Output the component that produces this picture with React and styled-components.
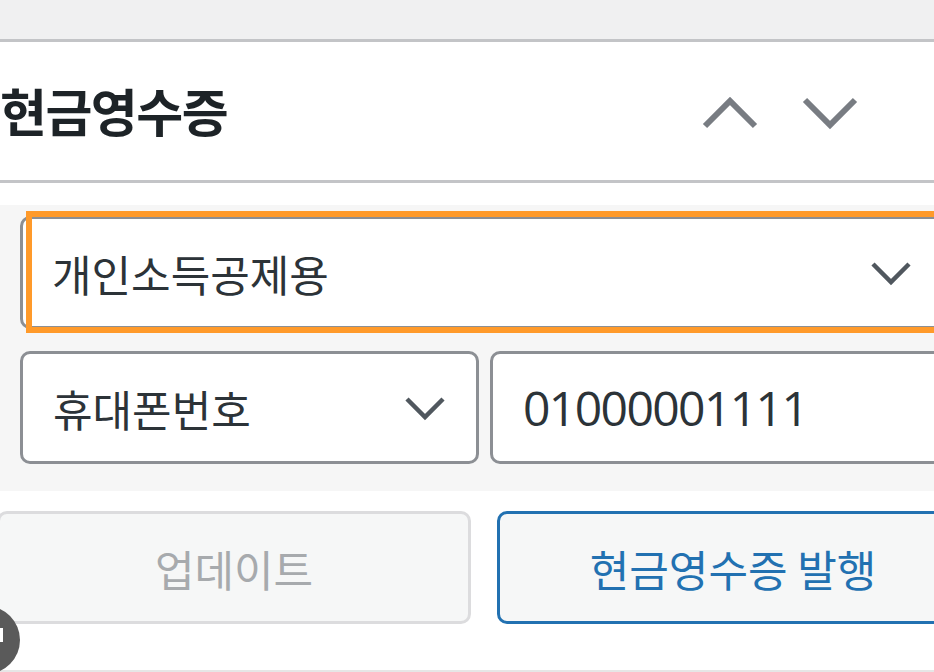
import styled, { createGlobalStyle } from 'styled-components';

const GlobalStyle = createGlobalStyle`
  html, body {
    margin: 0;
    padding: 0;
    background: #ffffff;
    overflow: hidden;
  }
  body {
    font-family: "Noto Sans CJK KR", "Noto Sans", sans-serif;
    color: #2c3338;
  }
`;

const Viewport = styled.div`
  position: relative;
  width: 934px;
  height: 672px;
  overflow: hidden;
  background: #ffffff;
`;

const Panel = styled.div`
  width: 990px;
`;

const TopBand = styled.div`
  height: 39px;
  background: #f0f0f1;
  border-bottom: 3px solid #c3c4c7;
`;

const Header = styled.div`
  height: 138px;
  display: flex;
  align-items: center;
  padding-right: 132px;
  border-bottom: 3px solid #c3c4c7;
  background: #ffffff;
`;

const Title = styled.h2`
  flex: 1;
  margin: 0;
  font-size: 51px;
  line-height: 1.2;
  font-weight: 700;
  color: #1d2327;
  letter-spacing: -1.5px;
`;

const Arrows = styled.div`
  display: flex;
  gap: 44px;
  align-items: center;
  padding-top: 4px;
`;

const ArrowButton = styled.button`
  border: none;
  background: none;
  padding: 0;
  display: flex;
  color: #787c82;
`;

const Body = styled.div`
  padding-top: 22px;
`;

const FormArea = styled.div`
  background: #f6f6f6;
  padding: 11px 0 27px 20px;
  display: flex;
  flex-direction: column;
  gap: 22px;
`;

const Row = styled.div`
  display: flex;
  gap: 11px;
`;

const Field = styled.div`
  position: relative;
  box-sizing: border-box;
  height: 113px;
  width: ${(p) => p.$width || 'auto'};
  flex: ${(p) => (p.$grow ? 1 : 'none')};
  display: flex;
  align-items: center;
  padding: 0 ${(p) => p.$padRight || 0}px 0 ${(p) => p.$padLeft || 32}px;
  background: #ffffff;
  border: 3px solid #8c8f94;
  border-radius: 10px;
  font-size: 43px;
  color: #2c3338;
`;

const FieldText = styled.span`
  flex: 1;
  white-space: nowrap;
  letter-spacing: ${(p) => p.$spacing || 0}px;
  font-family: ${(p) => (p.$digits ? '"Open Sans", sans-serif' : 'inherit')};
  font-size: ${(p) => (p.$digits ? '48px' : 'inherit')};
`;

const Caret = styled.svg`
  flex: none;
  color: #50575e;
`;

const Highlight = styled.div`
  position: absolute;
  left: 3px;
  top: -8px;
  right: -20px;
  bottom: -7px;
  border: 6px solid #ff9a2a;
  pointer-events: none;
`;

const Actions = styled.div`
  display: flex;
  gap: 26px;
  padding-top: 20px;
  height: 113px;
`;

const ActionButton = styled.button`
  box-sizing: border-box;
  height: 113px;
  width: ${(p) => p.$width || 'auto'};
  flex: none;
  margin-left: ${(p) => p.$offset || 0}px;
  border-radius: 10px;
  background: #f6f7f7;
  font-family: inherit;
  font-size: 43px;
  border: 3px solid ${(p) => (p.$primary ? '#2271b1' : '#dcdcde')};
  color: ${(p) => (p.$primary ? '#2271b1' : '#a7aaad')};
  white-space: nowrap;
`;

const BottomLine = styled.div`
  margin-top: 46px;
  border-top: 2px solid #e6e6e6;
`;

const HelpBubble = styled.div`
  position: absolute;
  left: -48px;
  top: 606px;
  width: 68px;
  height: 68px;
  border-radius: 50%;
  background: #5a5a5a;
  &::after {
    content: '';
    position: absolute;
    left: 48px;
    top: 22px;
    width: 3px;
    height: 14px;
    background: #ffffff;
  }
`;

function Chevron({ up }) {
  return (
    <svg width={56} height={34} viewBox="0 0 56 34" fill="none">
      <polyline
        points={up ? '3,30 28,5 53,30' : '3,4 28,29 53,4'}
        stroke="currentColor"
        strokeWidth={6}
      />
    </svg>
  );
}

function SelectCaret() {
  return (
    <Caret width="42" height="26" viewBox="0 0 42 26" fill="none">
      <polyline points="3,4 21,22 39,4" stroke="currentColor" strokeWidth="4.5" />
    </Caret>
  );
}

export default function App() {
  return (
    <Viewport>
      <GlobalStyle />
      <Panel>
        <TopBand />
        <Header>
          <Title>현금영수증</Title>
          <Arrows>
            <ArrowButton aria-label="위로 이동">
              <Chevron up />
            </ArrowButton>
            <ArrowButton aria-label="아래로 이동">
              <Chevron />
            </ArrowButton>
          </Arrows>
        </Header>
        <Body>
          <FormArea>
            <Row>
              <Field $grow $padLeft={29} $padRight={75}>
                <FieldText>개인소득공제용</FieldText>
                <SelectCaret />
                <Highlight />
              </Field>
            </Row>
            <Row>
              <Field $width="459px" $padLeft={30} $padRight={30}>
                <FieldText>휴대폰번호</FieldText>
                <SelectCaret />
              </Field>
              <Field $grow $padLeft={30}>
                <FieldText $digits $spacing={-1.6}>01000001111</FieldText>
              </Field>
            </Row>
          </FormArea>
          <Actions>
            <ActionButton $width="474px" $offset={-3}>업데이트</ActionButton>
            <ActionButton $width="472px" $primary>현금영수증 발행</ActionButton>
          </Actions>
          <BottomLine />
        </Body>
      </Panel>
      <HelpBubble />
    </Viewport>
  );
}
